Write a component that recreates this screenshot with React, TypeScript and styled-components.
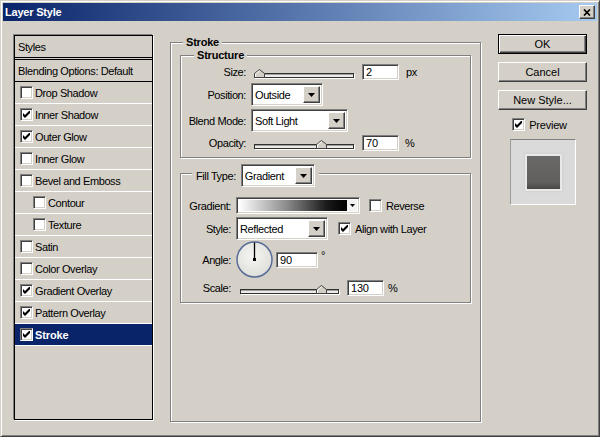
import React from "react";
import styled, { createGlobalStyle } from "styled-components";

const FACE = "#d4d0c8";
const NAVY = "#0a246a";

const GlobalStyle = createGlobalStyle`
  html, body {
    margin: 0;
    padding: 0;
    background: ${FACE};
  }
  body {
    font-family: "Liberation Sans", Tahoma, Arial, sans-serif;
    font-size: 11px;
    color: #000;
  }
  * {
    box-sizing: border-box;
  }
`;

const Window = styled.div`
  width: 600px;
  height: 437px;
  background: ${FACE};
  border: 1px solid;
  border-color: ${FACE} #404040 #404040 ${FACE};
  box-shadow: inset 1px 1px 0 #fff, inset -1px -1px 0 #808080;
  padding: 2px;
  display: flex;
  flex-direction: column;
`;

const TitleBar = styled.div`
  height: 18px;
  flex-shrink: 0;
  display: flex;
  align-items: center;
  justify-content: space-between;
  padding: 0 2px 0 2px;
  background: linear-gradient(to right, ${NAVY} 0%, #a6caf0 100%);
  color: #fff;
  font-weight: bold;
  letter-spacing: -0.2px;
`;

const raised = `
  background: ${FACE};
  border: 1px solid;
  border-color: #fff #404040 #404040 #fff;
  box-shadow: inset -1px -1px 0 #808080, inset 1px 1px 0 ${FACE};
`;

const sunken = `
  border: 1px solid;
  border-color: #808080 #fff #fff #808080;
  box-shadow: inset 1px 1px 0 #404040, inset -1px -1px 0 ${FACE};
`;

const CloseButton = styled.div`
  ${raised}
  width: 16px;
  height: 14px;
  display: grid;
  place-items: center;
`;

const Body = styled.div`
  flex: 1;
  display: flex;
  align-items: flex-start;
  padding-left: 11px;
`;

/* ---------- left styles list ---------- */

const StylesPanel = styled.div`
  width: 139px;
  height: 385px;
  margin-top: 14px;
  border: 1px solid #000;
  box-shadow: -1px -1px 0 #808080, 1px 1px 0 #fff;
  display: flex;
  flex-direction: column;
  letter-spacing: -0.4px;
`;

const PanelHeader = styled.div`
  height: 22px;
  border-bottom: 1px solid #000;
  display: flex;
  align-items: center;
  padding-left: 3px;
`;

const BlendRow = styled.div`
  height: 23px;
  margin-top: 1px;
  border-top: 1px solid #000;
  border-bottom: 1px solid #000;
  display: flex;
  align-items: center;
  padding-left: 3px;
`;

const StyleRow = styled.div<{ $indent?: boolean; $selected?: boolean }>`
  height: 22px;
  border-bottom: 1px solid #fff;
  display: flex;
  align-items: center;
  gap: 2px;
  padding-left: ${(p) => (p.$indent ? 18 : 5)}px;
  background: ${(p) => (p.$selected ? NAVY : "transparent")};
  color: ${(p) => (p.$selected ? "#fff" : "#000")};
  font-weight: ${(p) => (p.$selected ? "bold" : "normal")};
  letter-spacing: ${(p) => (p.$selected ? "-0.1px" : "-0.4px")};
`;

/* ---------- shared controls ---------- */

const CheckBoxFrame = styled.span`
  ${sunken}
  width: 13px;
  height: 13px;
  flex-shrink: 0;
  background: #fff;
  display: grid;
  place-items: center;
`;

const CheckBox = ({ checked }: { checked: boolean }) => (
  <CheckBoxFrame>
    {checked && (
      <svg width="7" height="7" viewBox="0 0 7 7">
        <path d="M0 2 L2 4 L7 -1 L7 2 L2 7 L0 5 Z" fill="#000" />
      </svg>
    )}
  </CheckBoxFrame>
);

const Field = styled.div<{ $w: number }>`
  ${sunken}
  width: ${(p) => p.$w}px;
  height: 16px;
  flex-shrink: 0;
  background: #fff;
  padding: 0 3px;
  display: flex;
  align-items: center;
  letter-spacing: -0.2px;
`;

const SelectFrame = styled.div<{ $w: number }>`
  ${sunken}
  width: ${(p) => p.$w}px;
  height: 23px;
  flex-shrink: 0;
  background: #fff;
  padding: 2px;
  display: flex;
  letter-spacing: -0.4px;
`;

const SelectText = styled.span`
  flex: 1;
  display: flex;
  align-items: center;
  padding-left: 1px;
`;

const ArrowButton = styled.span`
  ${raised}
  width: 17px;
  display: grid;
  place-items: center;
`;

const DownArrow = () => (
  <svg width="7" height="4" viewBox="0 0 7 4">
    <polygon points="0,0 7,0 3.5,4" fill="#000" />
  </svg>
);

const Select = ({ value, width }: { value: string; width: number }) => (
  <SelectFrame $w={width}>
    <SelectText>{value}</SelectText>
    <ArrowButton>
      <DownArrow />
    </ArrowButton>
  </SelectFrame>
);

const SliderWrap = styled.div<{ $w: number; $ml: number }>`
  position: relative;
  width: ${(p) => p.$w}px;
  height: 10px;
  margin-left: ${(p) => p.$ml}px;
  margin-top: 2px;
  flex-shrink: 0;
  display: flex;
  align-items: flex-end;
`;

const Track = styled.div`
  width: 100%;
  height: 5px;
  border: 1px solid #303030;
  background: #ecebe8;
  box-shadow: inset 0 1px 0 #a0a0a0, 1px 1px 0 #fff;
`;

const Thumb = styled.svg`
  position: absolute;
  bottom: 0;
`;

const Slider = ({
  width,
  value,
  min,
  max,
  ml = 3,
}: {
  width: number;
  value: number;
  min: number;
  max: number;
  ml?: number;
}) => {
  const pct = (value - min) / (max - min);
  return (
    <SliderWrap $w={width} $ml={ml}>
      <Track />
      <Thumb
        width="11"
        height="9"
        viewBox="0 0 11 9"
        style={{ left: Math.round(pct * (width - 11)) }}
      >
        <polygon points="0.5,8.5 0.5,4.5 5.5,0.5 10.5,4.5 10.5,8.5" fill={FACE} stroke="#404040" />
        <polyline points="1.5,8 1.5,5 5.5,1.7" fill="none" stroke="#fff" />
      </Thumb>
    </SliderWrap>
  );
};

/* ---------- group boxes ---------- */

const OuterGroup = styled.div`
  position: relative;
  width: 311px;
  height: 380px;
  margin-top: 21px;
  margin-left: 17px;
  border: 1px solid #808080;
  box-shadow: inset 1px 1px 0 #fff, 1px 1px 0 #fff;
  padding: 12px 9px 0 9px;
`;

const Group = styled.div<{ $mt?: number; $pt: number }>`
  position: relative;
  border: 1px solid #808080;
  box-shadow: inset 1px 1px 0 #fff, 1px 1px 0 #fff;
  margin-top: ${(p) => p.$mt ?? 0}px;
  padding: ${(p) => p.$pt}px 0 6px 0;
`;

const Legend = styled.div<{ $left: number }>`
  position: absolute;
  top: -7px;
  left: ${(p) => p.$left}px;
  padding: 0 3px;
  background: ${FACE};
  font-weight: bold;
  line-height: 13px;
  letter-spacing: -0.2px;
`;

const FillLegend = styled.div`
  position: absolute;
  top: -10px;
  left: 11px;
  height: 23px;
  padding: 0 4px;
  background: ${FACE};
  display: flex;
  align-items: center;
  gap: 5px;
  letter-spacing: -0.4px;
`;

const Row = styled.div<{ $h: number; $mt?: number }>`
  height: ${(p) => p.$h}px;
  margin-top: ${(p) => p.$mt ?? 0}px;
  display: flex;
  align-items: center;
`;

const Label = styled.span<{ $w: number }>`
  width: ${(p) => p.$w}px;
  flex-shrink: 0;
  text-align: right;
  margin-right: 5px;
  letter-spacing: -0.4px;
`;

const Unit = styled.span<{ $ml: number; $top?: boolean }>`
  margin-left: ${(p) => p.$ml}px;
  align-self: ${(p) => (p.$top ? "flex-start" : "center")};
  margin-top: ${(p) => (p.$top ? 8 : 0)}px;
  letter-spacing: -0.3px;
`;

const Spaced = styled.span<{ $ml: number }>`
  display: flex;
  align-items: center;
  margin-left: ${(p) => p.$ml}px;
`;

const OptionLabel = styled.span`
  margin-left: 4px;
  letter-spacing: -0.4px;
`;

const GradientFrame = styled.div`
  ${sunken}
  width: 124px;
  height: 17px;
  flex-shrink: 0;
  padding: 2px;
  display: flex;
  background: #fff;
`;

const GradientStrip = styled.span`
  flex: 1;
  background: linear-gradient(to right, #fff 0%, #8a8a8a 45%, #1a1a1a 82%, #000 100%);
`;

const GradientArrow = styled.span`
  width: 11px;
  border-left: 1px solid #000;
  background: #f2f2f2;
  display: grid;
  place-items: center;
`;

const Dial = () => (
  <svg width="37" height="37" viewBox="0 0 37 37">
    <defs>
      <radialGradient id="dialFill" cx="45%" cy="40%" r="65%">
        <stop offset="0%" stopColor="#f6f6f4" />
        <stop offset="100%" stopColor="#dcdcd8" />
      </radialGradient>
    </defs>
    <circle cx="18.5" cy="18.5" r="17.5" fill="url(#dialFill)" stroke="#5a6d98" strokeWidth="1.5" />
    <line x1="18.5" y1="18.5" x2="18.5" y2="1.5" stroke="#000" strokeWidth="1.3" />
    <rect x="17" y="17" width="3" height="3" fill="#000" />
  </svg>
);

/* ---------- right column ---------- */

const SideColumn = styled.div`
  width: 89px;
  margin-top: 13px;
  margin-left: 17px;
  display: flex;
  flex-direction: column;
  gap: 8px;
`;

const Button = styled.div<{ $default?: boolean }>`
  height: 20px;
  display: grid;
  place-items: center;
  background: ${FACE};
  border: 1px solid;
  border-color: ${(p) => (p.$default ? "#000" : "#fff #404040 #404040 #fff")};
  box-shadow: ${(p) =>
    p.$default
      ? "inset 1px 1px 0 #fff, inset -1px -1px 0 #404040, inset -2px -2px 0 #808080"
      : `inset -1px -1px 0 #808080, inset 1px 1px 0 ${FACE}`};
`;

const PreviewRow = styled.div`
  height: 13px;
  display: flex;
  align-items: center;
  justify-content: center;
  gap: 4px;
  padding-right: 6px;
  letter-spacing: -0.2px;
`;

const PreviewBox = styled.div`
  align-self: center;
  width: 66px;
  height: 66px;
  margin-left: 1px;
  background: #dadada;
  border: 1px solid;
  border-color: #808080 #fff #fff #9a9a9a;
  display: grid;
  place-items: center;
`;

const PreviewSwatch = styled.div`
  width: 33px;
  height: 33px;
  margin-top: 1px;
  background: linear-gradient(to bottom, #6a6866 0%, #62605e 80%, #4a4846 100%);
  box-shadow: 0 0 0 2px #e8e8e8, 0 0 2px 3px #d2d2d2;
`;

const styleItems: { name: string; checked: boolean; indent?: boolean }[] = [
  { name: "Drop Shadow", checked: false },
  { name: "Inner Shadow", checked: true },
  { name: "Outer Glow", checked: true },
  { name: "Inner Glow", checked: false },
  { name: "Bevel and Emboss", checked: false },
  { name: "Contour", checked: false, indent: true },
  { name: "Texture", checked: false, indent: true },
  { name: "Satin", checked: false },
  { name: "Color Overlay", checked: false },
  { name: "Gradient Overlay", checked: true },
  { name: "Pattern Overlay", checked: true },
];

export default function App() {
  return (
    <>
      <GlobalStyle />
      <Window>
        <TitleBar>
          <span>Layer Style</span>
          <CloseButton>
            <svg width="8" height="7" viewBox="0 0 8 7">
              <path d="M1 0.5 L7 6.5 M7 0.5 L1 6.5" stroke="#000" strokeWidth="1.7" />
            </svg>
          </CloseButton>
        </TitleBar>

        <Body>
          <StylesPanel>
            <PanelHeader>Styles</PanelHeader>
            <BlendRow>Blending Options: Default</BlendRow>
            {styleItems.map((item) => (
              <StyleRow key={item.name} $indent={item.indent}>
                <CheckBox checked={item.checked} />
                {item.name}
              </StyleRow>
            ))}
            <StyleRow $selected>
              <CheckBox checked />
              Stroke
            </StyleRow>
          </StylesPanel>

          <OuterGroup>
            <Legend $left={12}>Stroke</Legend>

            <Group $pt={8}>
              <Legend $left={13}>Structure</Legend>
              <Row $h={16}>
                <Label $w={65}>Size:</Label>
                <Slider width={100} value={2} min={1} max={250} />
                <Spaced $ml={8}>
                  <Field $w={37}>2</Field>
                </Spaced>
                <Unit $ml={7}>px</Unit>
              </Row>
              <Row $h={23} $mt={3}>
                <Label $w={65}>Position:</Label>
                <Select value="Outside" width={72} />
              </Row>
              <Row $h={23} $mt={3}>
                <Label $w={65}>Blend Mode:</Label>
                <Select value="Soft Light" width={97} />
              </Row>
              <Row $h={16} $mt={3}>
                <Label $w={65}>Opacity:</Label>
                <Slider width={100} value={70} min={0} max={100} />
                <Spaced $ml={8}>
                  <Field $w={37}>70</Field>
                </Spaced>
                <Unit $ml={6}>%</Unit>
              </Row>
            </Group>

            <Group $mt={15} $pt={23}>
              <FillLegend>
                Fill Type:
                <Select value="Gradient" width={74} />
              </FillLegend>
              <Row $h={17}>
                <Label $w={50}>Gradient:</Label>
                <GradientFrame>
                  <GradientStrip />
                  <GradientArrow>
                    <svg width="5" height="3" viewBox="0 0 5 3">
                      <polygon points="0,0 5,0 2.5,3" fill="#000" />
                    </svg>
                  </GradientArrow>
                </GradientFrame>
                <Spaced $ml={9}>
                  <CheckBox checked={false} />
                  <OptionLabel>Reverse</OptionLabel>
                </Spaced>
              </Row>
              <Row $h={23} $mt={3}>
                <Label $w={50}>Style:</Label>
                <Select value="Reflected" width={92} />
                <Spaced $ml={10}>
                  <CheckBox checked />
                  <OptionLabel>Align with Layer</OptionLabel>
                </Spaced>
              </Row>
              <Row $h={37} $mt={1}>
                <Label $w={50}>Angle:</Label>
                <Dial />
                <Spaced $ml={3}>
                  <Field $w={42}>90</Field>
                </Spaced>
                <Unit $ml={3} $top>
                  °
                </Unit>
              </Row>
              <Row $h={16} $mt={2}>
                <Label $w={50}>Scale:</Label>
                <Slider width={99} value={130} min={1} max={150} ml={4} />
                <Spaced $ml={8}>
                  <Field $w={37}>130</Field>
                </Spaced>
                <Unit $ml={4}>%</Unit>
              </Row>
            </Group>
          </OuterGroup>

          <SideColumn>
            <Button $default>OK</Button>
            <Button>Cancel</Button>
            <Button>New Style...</Button>
            <PreviewRow>
              <CheckBox checked />
              Preview
            </PreviewRow>
            <PreviewBox>
              <PreviewSwatch />
            </PreviewBox>
          </SideColumn>
        </Body>
      </Window>
    </>
  );
}
